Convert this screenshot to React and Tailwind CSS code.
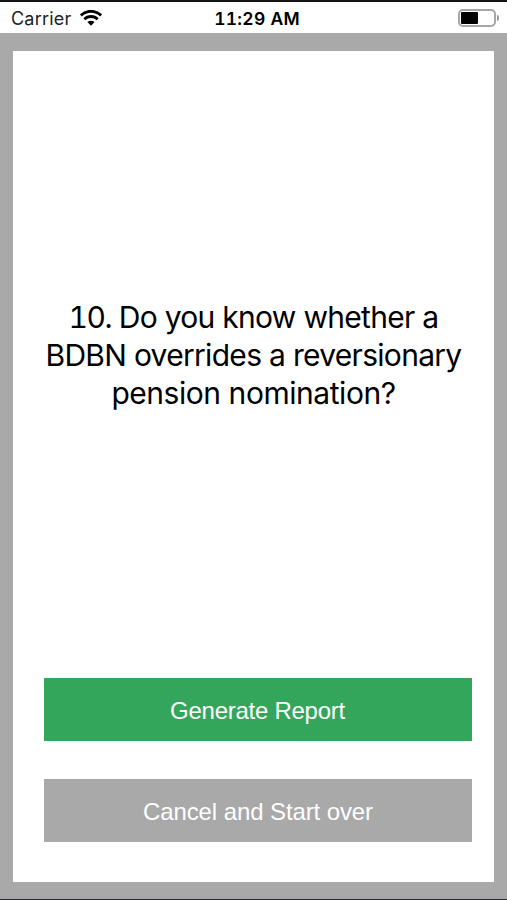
import React from 'react';

// iOS style wifi glyph, two arcs and a wedge
function WifiIcon() {
  return (
    <svg className="ml-[9px] h-4 w-[22px]" viewBox="0 0 22 16" fill="none">
      <path d="M0.9 5.4 A14.6 14.6 0 0 1 21.1 5.4" stroke="#000" strokeWidth="3" />
      <path d="M4.3 9.2 A9.6 9.6 0 0 1 17.7 9.2" stroke="#000" strokeWidth="2.8" />
      <path d="M7.4 12.1 A5.2 5.2 0 0 1 14.6 12.1 L11 15.8 Z" fill="#000" />
    </svg>
  );
}

// Battery outline with the charge level inside
function BatteryIcon() {
  return (
    <div className="flex items-center">
      <div className="h-[18px] w-[38px] rounded-[5px] border-2 border-[#a6a6a6] p-px">
        <div className="h-full w-[17px] rounded-[1px] bg-black"></div>
      </div>
      <div className="ml-[1px] h-[6px] w-[2px] rounded-r-full bg-[#9b9b9b]"></div>
    </div>
  );
}

function StatusBar() {
  return (
    <header className="grid h-[33px] grid-cols-3 items-center border-t-2 border-[#161316] bg-white pt-[1px] font-['Inter',sans-serif] text-black">
      <div className="flex items-center pl-[11px]">
        <span className="pt-px text-[18px] leading-5 tracking-[0.2px] text-[#222]">Carrier</span>
        <WifiIcon />
      </div>
      <span className="pt-px pl-[7px] text-center text-[17.5px] leading-5 font-semibold tracking-[0.25px] whitespace-nowrap tabular-nums">11:29 AM</span>
      <div className="flex justify-end pr-[8px]">
        <BatteryIcon />
      </div>
    </header>
  );
}

function App() {
  return (
    <div className="flex h-[900px] w-[507px] flex-col border-b border-[#2b272b] bg-[#a9a9a9]">
      <StatusBar />

      <main className="mt-[18px] mr-[13px] mb-[17px] ml-[13px] flex flex-1 flex-col bg-white pr-[22px] pl-[31px]">
        {/* Question */}
        <h1 className="mt-[247px] mr-[-22px] ml-[-31px] text-center font-['Inter',sans-serif] text-[30px] leading-[38px] font-normal text-black">
          <span className="block tracking-[-0.7px]"><span className="tracking-[-1.5px] tabular-nums">10.</span> Do you know whether a</span>
          <span className="block tracking-[-0.7px]">BDBN overrides a reversionary</span>
          <span className="block tracking-[-0.45px]">pension nomination?</span>
        </h1>

        {/* Actions */}
        <div className="mt-auto mb-[40px] flex flex-col gap-[38px] font-['Liberation_Sans',sans-serif] text-[24px] leading-7 text-white">
          <button className="h-[63px] bg-[#33a65b] pt-[2px] pr-px tracking-[-0.26px]">Generate Report</button>
          <button className="h-[63px] bg-[#a9a9a9] pt-[2px] tracking-[-0.1px]">Cancel and Start over</button>
        </div>
      </main>
    </div>
  );
}

export default App;
